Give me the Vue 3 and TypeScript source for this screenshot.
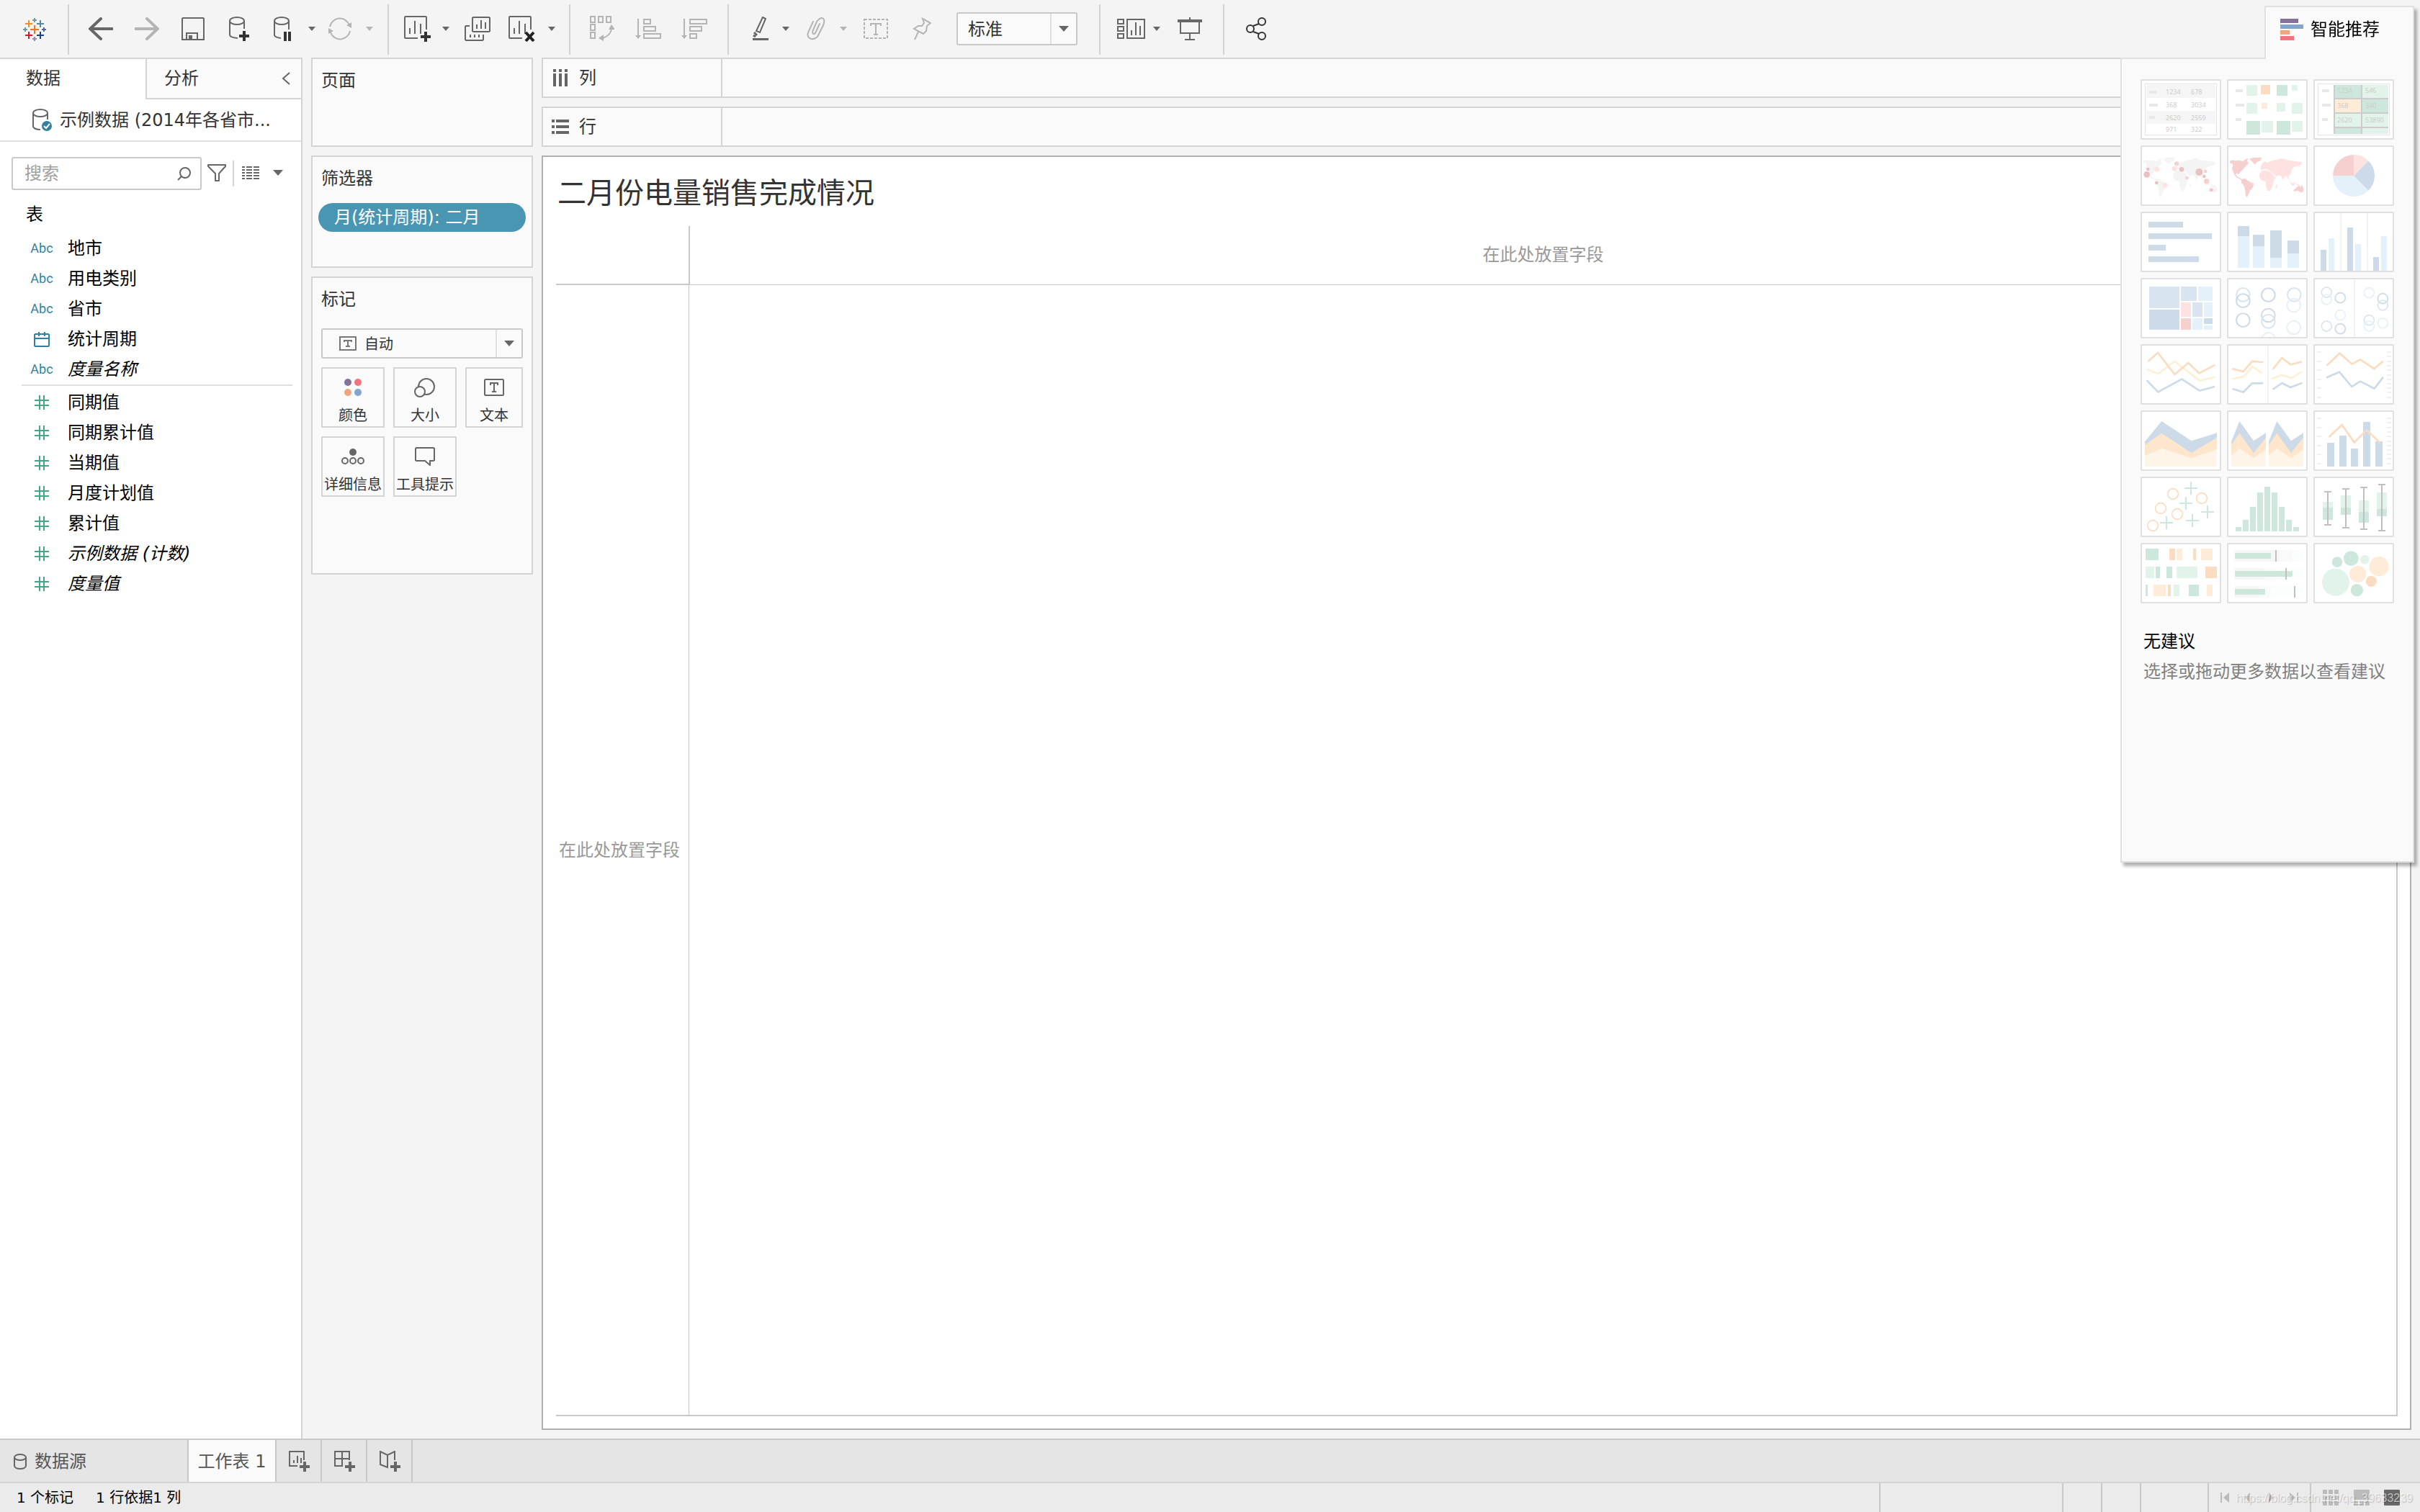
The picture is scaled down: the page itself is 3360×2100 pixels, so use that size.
<script setup lang="ts">
import { ref } from 'vue'

interface Icon { w: number; h: number; body: string }
interface Tool { icon: string; label: string; off?: boolean }
interface Field { name: string; kind: 'abc' | 'date' | 'num'; italic?: boolean }

const G = '#666'
const L = '#b4b4b4'
const stroke = (d: string, c = G, w = 2) => `<path d="${d}" fill="none" stroke="${c}" stroke-width="${w}"/>`
const fill = (d: string, c = G) => `<path d="${d}" fill="${c}"/>`
const cross = (x: number, y: number, s: number, c: string) => stroke(`M${x - s} ${y}H${x + s}M${x} ${y - s}V${y + s}`, c, 2)
const chart = stroke('M31 19V2Q31 1 30 1H2Q1 1 1 2V30Q1 31 2 31H19M8 17V25M15 7V25M23 11V25')

const icons: Record<string, Icon> = {
  logo: { w: 32, h: 32, body: cross(16, 16, 6, '#e8762c') + cross(16, 3, 3, '#7099a6') + cross(8, 8, 5, '#eb912b') + cross(24, 8, 5, '#59879b') + cross(3, 16, 3, '#7099a6') + cross(29, 16, 3, '#5b6591') + cross(8, 24, 5, '#c72035') + cross(24, 24, 5, '#1f447e') + cross(16, 29, 3, '#8b8fb0') },
  back: { w: 34, h: 32, body: `<path d="M17 2L2 16L17 30M2 16H33" fill="none" stroke="${G}" stroke-width="4" stroke-linecap="round"/>` },
  forward: { w: 34, h: 32, body: `<path d="M17 2L32 16L17 30M32 16H1" fill="none" stroke="${L}" stroke-width="4" stroke-linecap="round"/>` },
  save: { w: 32, h: 32, body: stroke('M2 1H30L31 2V31H1V2ZM7 31V22H22V31M11 31V26H15') + fill('M10 25h5v6h-5z') },
  dbPlus: { w: 28, h: 34, body: `<ellipse cx="11" cy="6" rx="10" ry="5" fill="none" stroke="${G}" stroke-width="2"/>` + stroke('M1 6V26Q2 29 12 30M21 6V17') + stroke('M14 27H28M21 20V34', '#333', 4) },
  dbPause: { w: 24, h: 34, body: `<ellipse cx="11" cy="6" rx="10" ry="5" fill="none" stroke="${G}" stroke-width="2"/>` + stroke('M1 6V26Q2 29 10 30M21 6V18') + fill('M14 21h4v13h-4zM20 21h4v13h-4z', '#333') },
  refresh: { w: 34, h: 32, body: stroke('M3 13A14 14 0 0 1 30 11M31 19A14 14 0 0 1 4 21', L) + fill('M26 11L33 7V15ZM1 15L8 19L1 23Z', L) },
  chartPlus: { w: 37, h: 36, body: chart + stroke('M23 29H37M30 22V36', '#333', 4) },
  chartX: { w: 37, h: 36, body: chart + stroke('M24 23L35 35M35 23L24 35', '#222', 4) },
  duplicate: { w: 36, h: 34, body: stroke('M12 1H34L35 2V20L34 21H12L11 20V2ZM17 11V17M23 5V17M29 8V17M7 13H2L1 14V32L2 33H25L26 32V25M8 25V29M14 25V29M20 25V29') },
  swap: { w: 34, h: 36, body: stroke('M1 1H7V9H1ZM12 1H18V9H12ZM23 1H29V9H23ZM1 12H7V20H1ZM1 23H7V31H1ZM30 18Q29 27 18 31', L) + fill('M30 12L35 19H26ZM12 31L19 26V35Z', L) },
  sortAsc: { w: 36, h: 28, body: stroke('M4 0V24M12 1H21V7H12ZM12 11H28V17H12ZM12 21H35V27H12Z', L) + fill('M0 23H8L4 28Z', L) },
  sortDesc: { w: 36, h: 28, body: stroke('M4 0V24M12 21H21V27H12ZM12 11H28V17H12ZM12 1H35V7H12Z', L) + fill('M0 23H8L4 28Z', L) },
  pen: { w: 22, h: 34, body: stroke('M14 1L18 3L10 22L5 20Z') + stroke('M2 22L6 26M1 26L4 28', G, 3) + fill('M0 30H22V33H0Z') },
  clip: { w: 26, h: 32, body: `<path d="M18 9L12 22Q9 25 8 20L14 6Q20 -2 24 3Q25 6 23 11L15 27Q8 33 3 28Q0 25 3 19L9 6" fill="none" stroke="${L}" stroke-width="2" stroke-linecap="round"/>` },
  textBox: { w: 34, h: 28, body: `<path d="M1 1H33V27H1Z" fill="none" stroke="${L}" stroke-width="2" stroke-dasharray="4 2"/>` + stroke('M10 10V7H24V10M17 7V22M14 22H20', L) },
  pin: { w: 26, h: 32, body: stroke('M14 2L25 8L20 12L19 19L15 23L2 16L8 12H13L16 8ZM8 20L3 31', L) },
  cards: { w: 40, h: 28, body: stroke('M1 1H9V7H1ZM1 11H9V17H1ZM1 21H9V27H1ZM14 1H38V27H14ZM20 16V23M26 5V23M32 10V23') },
  present: { w: 34, h: 32, body: fill('M0 3H34V7H0ZM16 0H18V3H16ZM10 30H24V32H10Z') + stroke('M4 6V22H30V6M17 23V31') },
  share: { w: 28, h: 32, body: `<g fill="none" stroke="#333" stroke-width="2"><circle cx="6" cy="16" r="5"/><circle cx="22" cy="6" r="5"/><circle cx="22" cy="26" r="5"/><path d="M10 12L18 9M10 20L18 23"/></g>` },
  caret: { w: 12, h: 8, body: fill('M1 1H11L6 7Z') },
  caretOff: { w: 12, h: 8, body: fill('M1 1H11L6 7Z', L) },
  caretBig: { w: 14, h: 8, body: fill('M0 0H14L7 8Z') },
  chevron: { w: 12, h: 18, body: stroke('M11 1L2 9L11 17') },
  source: { w: 28, h: 32, body: `<ellipse cx="11" cy="6" rx="10" ry="5" fill="none" stroke="${G}" stroke-width="2"/>` + stroke('M1 6V25Q3 29 11 29M21 6V15') + `<circle cx="20" cy="24" r="7" fill="#347fa0"/>` + stroke('M16 24L19 27L24 21', '#fff') },
  search: { w: 19, h: 19, body: `<circle cx="11" cy="8" r="7" fill="none" stroke="${G}" stroke-width="2"/>` + stroke('M6 13L1 18') },
  funnel: { w: 26, h: 25, body: `<path d="M1 1H25V3L16 13V23H11V13L1 3Z" fill="none" stroke="${G}" stroke-width="2" stroke-linejoin="round"/>` },
  list: { w: 24, h: 18, body: [0, 4, 8, 12, 16].map(y => fill(`M0 ${y}h4v2h-4zM6 ${y}h8v2h-8zM16 ${y}h8v2h-8z`)).join('') },
  date: { w: 22, h: 21, body: stroke('M2 3H20L21 4V19L20 20H2L1 19V4ZM1 9H21M7 0V6M15 0V6', '#347fa0') },
  num: { w: 20, h: 20, body: stroke('M0 7H20M0 14H20M7 0V20M13 0V20', '#45a785') },
  columns: { w: 24, h: 24, body: fill('M2 0h4v4h-4zM10 0h4v4h-4zM18 0h4v4h-4zM2 6h4v18h-4zM10 6h4v18h-4zM18 6h4v18h-4z') },
  rows: { w: 24, h: 20, body: fill('M0 0h4v4h-4zM0 8h4v4h-4zM0 16h4v4h-4zM6 0h18v4h-18zM6 8h18v4h-18zM6 16h18v4h-18z') },
  textSmall: { w: 24, h: 20, body: stroke('M1 1H23V19H1ZM7 8V6H17V8M12 6V14M9 14H15', '#777') },
  colour: { w: 26, h: 26, body: '<circle cx="6" cy="6" r="5" fill="#857199"/><circle cx="20" cy="6" r="5" fill="#f9717f"/><circle cx="6" cy="20" r="5" fill="#f2a57c"/><circle cx="20" cy="20" r="5" fill="#83a4cb"/>' },
  size: { w: 30, h: 28, body: `<g fill="#fafafa" stroke="${G}" stroke-width="2"><circle cx="17" cy="13" r="11"/><circle cx="8" cy="20" r="7"/></g>` },
  text: { w: 28, h: 24, body: stroke('M2 1H26L27 2V22L26 23H2L1 22V2ZM9 9V6H19V9M14 6V18M11 18H17') },
  detail: { w: 32, h: 22, body: `<circle cx="16" cy="5" r="5" fill="${G}"/><g fill="none" stroke="${G}" stroke-width="2"><circle cx="5" cy="17" r="4"/><circle cx="16" cy="17" r="4"/><circle cx="27" cy="17" r="4"/></g>` },
  tooltip: { w: 28, h: 26, body: stroke('M2 1H26L27 2V18L26 19H21V25L14 19H2L1 18V2Z') },
  showMe: { w: 32, h: 30, body: fill('M0 0H25V6H0Z', '#857199') + fill('M0 8H32V14H0Z', '#83a4cb') + fill('M0 16H13V22H0Z', '#f2a57c') + fill('M0 24H19V30H0Z', '#f9717f') },
  dbSmall: { w: 18, h: 22, body: stroke('M1 5V17Q2 21 9 21Q16 21 17 17V5') + `<ellipse cx="9" cy="5" rx="8" ry="4" fill="none" stroke="${G}" stroke-width="2"/>` },
  newSheet: { w: 30, h: 30, body: stroke('M21 13V1H1V21H12M7 13V17M12 7V17M17 10V17') + stroke('M15 22H29M22 15V29', G, 4) },
  newDash: { w: 30, h: 30, body: stroke('M21 13V1H1V21H12M11 1V21M1 11H21') + stroke('M15 22H29M22 15V29', G, 4) },
  newStory: { w: 30, h: 30, body: stroke('M21 13V1L11 6L1 1V19L11 23V6') + stroke('M15 22H29M22 15V29', G, 4) },
  first: { w: 12, h: 14, body: fill('M0 0h2v14h-2zM12 0V14L4 7Z', '#bbb') },
  prev: { w: 12, h: 14, body: fill('M9 0V14L2 7Z', '#bbb') },
  next: { w: 12, h: 14, body: fill('M3 0V14L9 7Z', '#aaa') },
  last: { w: 12, h: 14, body: fill('M10 0h2v14h-2zM0 0V14L8 7Z', '#bbb') },
  gridView: { w: 22, h: 22, body: [0, 8, 16].map(y => fill(`M0 ${y}h6v6h-6zM8 ${y}h6v6h-6zM16 ${y}h6v6h-6z`, '#bbb')).join('') },
  film: { w: 22, h: 22, body: fill('M0 0h22v14h-22zM0 16h6v6h-6zM8 16h6v6h-6zM16 16h6v6h-6z', '#bbb') },
  tabView: { w: 22, h: 22, body: fill('M1 0H21L22 1V21L21 22H1L0 21V1Z') },
}

const groups: { cls: string; tools: Tool[] }[] = [
  { cls: 'g-data', tools: [
    { icon: 'back', label: '撤消' }, { icon: 'forward', label: '重做', off: true }, { icon: 'save', label: '保存' },
    { icon: 'dbPlus', label: '新建数据源' }, { icon: 'dbPause', label: '暂停自动更新' }, { icon: 'caret', label: '更新选项' },
    { icon: 'refresh', label: '运行更新', off: true }, { icon: 'caretOff', label: '运行选项', off: true },
  ] },
  { cls: 'g-sheet', tools: [
    { icon: 'chartPlus', label: '新建工作表' }, { icon: 'caret', label: '新建选项' }, { icon: 'duplicate', label: '复制' },
    { icon: 'chartX', label: '清除工作表' }, { icon: 'caret', label: '清除选项' },
  ] },
  { cls: 'g-sort', tools: [
    { icon: 'swap', label: '交换行和列', off: true }, { icon: 'sortAsc', label: '升序排序', off: true }, { icon: 'sortDesc', label: '降序排序', off: true },
  ] },
  { cls: 'g-format', tools: [
    { icon: 'pen', label: '突出显示' }, { icon: 'caret', label: '突出显示选项' }, { icon: 'clip', label: '成员分组', off: true },
    { icon: 'caretOff', label: '分组选项', off: true }, { icon: 'textBox', label: '显示标记标签', off: true }, { icon: 'pin', label: '固定轴', off: true },
  ] },
  { cls: 'g-view', tools: [
    { icon: 'cards', label: '显示/隐藏卡' }, { icon: 'caret', label: '卡选项' }, { icon: 'present', label: '演示模式' },
  ] },
  { cls: 'g-share', tools: [{ icon: 'share', label: '共享' }] },
]

const dimensions: Field[] = [
  { name: '地市', kind: 'abc' }, { name: '用电类别', kind: 'abc' }, { name: '省市', kind: 'abc' },
  { name: '统计周期', kind: 'date' }, { name: '度量名称', kind: 'abc', italic: true },
]
const measures: Field[] = [
  { name: '同期值', kind: 'num' }, { name: '同期累计值', kind: 'num' }, { name: '当期值', kind: 'num' },
  { name: '月度计划值', kind: 'num' }, { name: '累计值', kind: 'num' },
  { name: '示例数据 (计数)', kind: 'num', italic: true }, { name: '度量值', kind: 'num', italic: true },
]
const marks = [
  { icon: 'colour', label: '颜色' }, { icon: 'size', label: '大小' }, { icon: 'text', label: '文本' },
  { icon: 'detail', label: '详细信息' }, { icon: 'tooltip', label: '工具提示' },
]
const newTabs = [
  { icon: 'newSheet', label: '新建工作表' }, { icon: 'newDash', label: '新建仪表板' }, { icon: 'newStory', label: '新建故事' },
]

const fit = ref('标准')
const markType = ref('自动')
const query = ref('')

/* Chart thumbnails, drawn on a 336 x 252 canvas */
const B = '#cddae7', BM = '#d8e5f0', BL = '#e4f0fa'
const GR = '#cee7dc', GL = '#e2f3e9', OR = '#fbdcc0', OL = '#feebd8'
const PK = '#f6d0cf', PL = '#fee1e1', YL = '#fdf0d5'
const r = (c: string, ...boxes: number[][]) => boxes.map(([x, y, w, h]) => `<rect x="${x}" y="${y}" width="${w}" height="${h}" fill="${c}"/>`).join('')
const ring = (c: string, rad: number, w: number, ...pts: number[][]) => pts.map(([x, y]) => `<circle cx="${x}" cy="${y}" r="${rad}" fill="none" stroke="${c}" stroke-width="${w}"/>`).join('')
const dot = (c: string, ...pts: number[][]) => pts.map(([x, y, s]) => `<circle cx="${x}" cy="${y}" r="${s}" fill="${c}"/>`).join('')
const line = (c: string, d: string) => `<path d="${d}" fill="none" stroke="${c}" stroke-width="8" stroke-linecap="round"/>`
const num = (...items: [number, number, string][]) => items.map(([x, y, t]) => `<text x="${x}" y="${y}" font-family="Noto Sans, sans-serif" font-size="27" fill="#ccc">${t}</text>`).join('')
const ticks = [30, 69, 105, 144, 180, 219].map(y => r('#f0f0f0', [15, y, 18, 6])).join('') +
  [30, 48, 69, 87, 105, 126, 144, 162, 180, 198, 219].map(y => r('#f0f0f0', [306, y, 18, 6])).join('')
const frame = '<rect x="19" y="19" width="298" height="214" fill="none" stroke="#e4e4e4" stroke-width="3"/>'
const americas = 'M12 66L20 61L36 64L52 62L66 66L80 56L90 54L82 66L92 72L80 84L70 96L62 106L54 112L48 122L44 116L36 118L40 128L48 132L62 140L76 138L88 148L112 160L106 178L96 188L88 206L84 216L78 210L76 190L72 170L60 156L60 144L50 138L40 134L30 120L24 106L20 94L26 84L22 74L14 76ZM92 56L110 51L146 51L138 64L124 70L116 80L108 70Z'
const oldWorld = 'M142 86L148 74L158 66L168 72L190 62L214 58L230 54L256 62L290 66L314 70L308 82L300 84L304 94L296 84L280 90L270 100L266 118L256 128L262 146L268 160L258 142L248 128L240 128L234 146L226 128L212 124L206 130L196 120L186 108L176 106L166 98L152 100L142 102L140 92ZM136 118L146 104L166 104L186 112L196 130L204 132L194 150L190 170L180 188L170 190L162 168L162 150L144 146L134 132ZM204 166L210 160L208 176L202 178ZM262 150L274 158L286 154L282 166L270 166ZM288 160L304 166L308 174L296 170Z'
const oceania = 'M278 186L290 174L300 168L306 174L312 164L320 184L316 194L306 196L296 188L278 192Z'
const area = (x: number, k: number) => {
  const p = (v: number) => Math.round(x + v * k)
  return `<path d="M${p(0)} 130L${p(70)} 45L${p(194)} 127L${p(300)} 94V234H${p(0)}Z" fill="${B}"/>` +
    `<path d="M${p(0)} 143L${p(70)} 95L${p(194)} 177L${p(300)} 113V234H${p(0)}Z" fill="#fee6cc"/>` +
    `<path d="M${p(0)} 189L${p(70)} 158L${p(194)} 199L${p(300)} 163V234H${p(0)}Z" fill="#fef5e8"/>`
}
const box = (x: number, top: number, up: number, mid: number, low: number, bottom: number) =>
  r(GL, [x, up, 42, mid - up]) + r(GR, [x, mid, 42, low - mid]) +
  r('#c0c0c0', [x + 18, top, 6, bottom - top], [x + 6, top, 30, 6], [x + 6, bottom - 6, 30, 6])

const thumbs: { name: string; body: string }[] = [
  { name: '文本表', body: frame + r('#f5f5f5', [24, 24, 288, 54], [24, 132, 288, 54]) + r('#e8e8e8', [36, 48, 30, 12], [36, 102, 36, 12], [36, 153, 24, 12]) +
    num([105, 62, '1234'], [210, 62, '678'], [105, 116, '368'], [210, 116, '3034'], [105, 170, '2620'], [210, 170, '2559'], [105, 218, '971'], [210, 218, '322']) },
  { name: '热图', body: r('#e8e8e8', [36, 42, 30, 12], [36, 102, 36, 12], [36, 162, 24, 12]) + r(GL, [81, 24, 45, 45], [270, 24, 24, 24], [81, 99, 45, 45], [207, 99, 36, 36], [270, 99, 45, 45], [144, 174, 48, 48], [270, 174, 45, 45]) +
    r(GR, [207, 24, 45, 45], [81, 174, 57, 57], [207, 174, 57, 57]) + r(OR, [141, 24, 39, 39]) + r(OL, [144, 99, 24, 24]) },
  { name: '突出显示表', body: frame + r('#e8e8e8', [36, 42, 30, 12], [36, 102, 36, 12], [36, 162, 24, 12]) + r('#ccc', [84, 24, 228, 204]) +
    r(GR, [90, 24, 108, 54], [204, 84, 108, 54], [90, 204, 108, 24]) + r(GL, [204, 24, 108, 54], [90, 144, 108, 54], [204, 144, 108, 54], [204, 204, 108, 24]) + r(OL, [90, 84, 108, 54]) +
    num([99, 57, '1234'], [216, 57, '546'], [99, 120, '368'], [216, 120, '340'], [99, 180, '2620'], [216, 180, '53890']) },
  { name: '符号地图', body: fill(americas + oldWorld + oceania, '#f4f4f4') + dot('#ebc0c5', [26, 121, 13], [31, 99, 7], [171, 100, 10], [244, 111, 15], [265, 129, 7], [67, 156, 7], [295, 186, 7]) +
    dot(PL, [69, 100, 10], [141, 97, 10], [102, 166, 10]) + dot(PK, [150, 76, 9], [193, 135, 7], [271, 108, 7], [275, 149, 11]) },
  { name: '填充地图', body: fill(americas + oceania, PK) + fill(oldWorld, PL) },
  { name: '饼图', body: fill('M168 126V39A87 87 0 0 0 81 126Z', PK) + fill('M168 126H81A87 87 0 0 0 229 188Z', BL) + fill('M168 126L229 188A87 87 0 0 0 229 64Z', B) + fill('M168 126L229 64A87 87 0 0 0 168 39Z', PL) },
  { name: '水平条', body: r(B, [33, 42, 144, 24], [33, 90, 264, 24], [33, 138, 72, 24], [33, 186, 210, 24]) },
  { name: '堆叠条', body: r(B, [45, 60, 48, 42], [108, 96, 48, 48], [180, 78, 48, 114], [252, 120, 48, 54]) + r(BL, [45, 102, 48, 132], [108, 144, 48, 90], [180, 192, 48, 42], [252, 174, 48, 60]) },
  { name: '并排条', body: r('#f2f2f2', [111, 6, 6, 240], [222, 6, 6, 240]) + r(B, [30, 159, 24, 87], [141, 66, 24, 180], [249, 189, 24, 57]) + r(BL, [63, 111, 24, 135], [174, 135, 24, 111], [282, 102, 24, 144]) },
  { name: '树状图', body: r(BM, [36, 36, 126, 90], [168, 36, 66, 60], [216, 102, 42, 60]) + r(B, [36, 132, 126, 84], [264, 168, 36, 24]) + r(BL, [240, 36, 60, 60], [264, 102, 36, 60], [216, 168, 42, 48], [264, 198, 36, 18]) + r(PL, [168, 102, 42, 60]) + r(PK, [168, 168, 42, 48]) },
  { name: '圆视图', body: ring(BM, 28, 6, [67, 70], [280, 70]) + ring(B, 28, 6, [67, 95], [67, 176], [172, 71], [172, 156]) + ring(BM, 28, 6, [172, 181]) + ring(BL, 28, 6, [278, 114], [278, 207], [173, 256]) },
  { name: '并排圆', body: r('#f2f2f2', [168, 6, 6, 240]) + ring(BM, 21, 5, [55, 60], [55, 201], [232, 176]) + ring(B, 21, 5, [112, 83], [112, 212], [289, 86]) + ring(BM, 21, 5, [289, 114]) + ring(BL, 21, 5, [55, 90], [112, 155], [232, 62], [289, 189], [232, 201]) },
  { name: '线', body: line(YL, 'M29 106L74 124L141 71L246 152L306 138') + line(OR, 'M35 69L72 36L142 126L199 78L244 121L307 88') + line(B, 'M28 153L73 199L172 146L246 194L306 178') },
  { name: '离散线', body: r('#f2f2f2', [168, 6, 6, 240]) + line(YL, 'M25 144L68 136L107 93L143 120M188 144L227 129L270 141L311 116') + line(OR, 'M25 103L68 114L105 71L147 75M193 102L229 57L265 85L309 74') + line(B, 'M26 187L68 200L105 163L147 163M193 187L229 162L265 180L310 163') },
  { name: '双线', body: ticks + line(OR, 'M58 87L109 38L161 83L195 64L253 102L288 73') + line(B, 'M57 138L108 116L160 177L195 155L254 185L289 140') },
  { name: '面积图', body: area(18, 1) },
  { name: '离散面积图', body: area(18, 0.48) + area(174, 0.48) },
  { name: '双组合', body: ticks + r(B, [57, 135, 30, 99], [108, 105, 30, 129], [156, 159, 30, 75], [207, 48, 30, 186], [258, 129, 30, 105]) + line(OR, 'M67 109L119 60L170 133L222 82L275 133') },
  { name: '散点图', body: ring(OR, 22, 5, [135, 72], [255, 90], [84, 132], [153, 156], [51, 204]) + [[210, 48], [189, 111], [279, 147], [216, 183], [108, 192]].map(([x, y]) => stroke(`M${x - 27} ${y}H${x + 27}M${x} ${y - 27}V${y + 27}`, GR, 6)).join('') },
  { name: '直方图', body: r(GR, [36, 210, 24, 18], [66, 180, 24, 48], [96, 126, 24, 102], [126, 66, 24, 162], [156, 42, 24, 186], [186, 66, 24, 162], [216, 126, 24, 102], [246, 180, 24, 48], [276, 210, 24, 18]) },
  { name: '盒须图', body: box(39, 60, 105, 129, 180, 204) + box(114, 48, 78, 129, 159, 216) + box(189, 42, 99, 147, 192, 222) + box(264, 30, 66, 135, 165, 228) },
  { name: '甘特图', body: r(GR, [21, 24, 54, 48], [63, 99, 18, 48], [108, 99, 24, 48], [21, 174, 9, 48], [201, 174, 42, 48]) + r(GL, [21, 99, 36, 48], [150, 99, 87, 48], [138, 174, 24, 48]) + r(OR, [120, 24, 24, 48], [219, 24, 12, 48], [270, 99, 48, 48], [114, 174, 12, 48]) + r(OL, [150, 24, 24, 48], [252, 24, 48, 48], [54, 174, 51, 48], [276, 174, 24, 48]) },
  { name: '标靶图', body: r('#fcfefd', [33, 30, 285, 48], [33, 105, 285, 48], [33, 180, 285, 48]) + r('#fafafa', [33, 30, 237, 48], [33, 105, 174, 48], [33, 180, 150, 48]) + r('#f6f6f6', [33, 30, 186, 48], [33, 105, 120, 48], [33, 180, 102, 48]) + r(GR, [33, 42, 150, 24], [33, 117, 240, 24], [33, 192, 126, 24]) + r('#c0c0c0', [201, 30, 6, 48], [243, 105, 6, 48], [279, 180, 6, 48]) },
  { name: '填充气泡图', body: dot(GL, [93, 164, 57], [214, 70, 19]) + dot(GR, [99, 80, 22], [157, 65, 31], [181, 197, 26]) + dot(OL, [273, 98, 41], [185, 130, 35]) + dot(OR, [241, 160, 23]) },
]
</script>

<template>
  <div class="app">
    <header class="toolbar">
      <div class="logo"><svg width="32" height="32" v-html="icons.logo.body" /></div>
      <template v-for="g in groups" :key="g.cls">
        <div class="group" :class="g.cls">
          <button v-for="t in g.tools" :key="t.label" type="button" :aria-label="t.label" :disabled="t.off">
            <svg :width="icons[t.icon].w" :height="icons[t.icon].h" v-html="icons[t.icon].body" />
          </button>
          <div v-if="g.cls === 'g-format'" class="picker fit">
            <select v-model="fit" aria-label="适合"><option>标准</option></select>
            <span class="drop"><svg width="14" height="8" v-html="icons.caretBig.body" /></span>
          </div>
        </div>
      </template>
    </header>

    <main class="work">
      <aside class="data">
        <div class="tabs">
          <button type="button" class="tab active">数据</button>
          <div class="tab-rest">
            <button type="button" class="tab">分析</button>
            <button type="button" class="collapse" aria-label="折叠"><svg width="12" height="18" v-html="icons.chevron.body" /></button>
          </div>
        </div>
        <button type="button" class="source">
          <svg width="28" height="32" v-html="icons.source.body" />
          <span>示例数据 (2014年各省市...</span>
        </button>
        <div class="find">
          <label class="search">
            <input v-model="query" type="text" placeholder="搜索" aria-label="搜索">
            <svg width="19" height="19" v-html="icons.search.body" />
          </label>
          <button type="button" class="funnel" aria-label="筛选"><svg width="26" height="25" v-html="icons.funnel.body" /></button>
          <button type="button" class="view-by" aria-label="查看方式">
            <svg width="24" height="18" v-html="icons.list.body" />
            <svg width="14" height="8" v-html="icons.caretBig.body" />
          </button>
        </div>
        <h2 class="tables">表</h2>
        <ul class="fields">
          <li v-for="f in dimensions" :key="f.name">
            <span class="kind"><template v-if="f.kind === 'abc'">Abc</template><svg v-else width="22" height="21" v-html="icons.date.body" /></span>
            <span :class="{ italic: f.italic }">{{ f.name }}</span>
          </li>
        </ul>
        <ul class="fields measures">
          <li v-for="f in measures" :key="f.name">
            <span class="kind"><svg width="20" height="20" v-html="icons.num.body" /></span>
            <span :class="{ italic: f.italic }">{{ f.name }}</span>
          </li>
        </ul>
      </aside>

      <section class="cards">
        <div class="card pages"><h3>页面</h3></div>
        <div class="card filters">
          <h3>筛选器</h3>
          <button type="button" class="pill">月(统计周期): 二月</button>
        </div>
        <div class="card marks">
          <h3>标记</h3>
          <div class="picker mark-type">
            <svg class="lead" width="24" height="20" v-html="icons.textSmall.body" />
            <select v-model="markType" aria-label="标记类型"><option>自动</option></select>
            <span class="drop"><svg width="14" height="8" v-html="icons.caretBig.body" /></span>
          </div>
          <div class="mark-grid">
            <button v-for="m in marks" :key="m.label" type="button">
              <span class="mark-icon"><svg :width="icons[m.icon].w" :height="icons[m.icon].h" v-html="icons[m.icon].body" /></span>
              <span class="mark-label">{{ m.label }}</span>
            </button>
          </div>
        </div>
      </section>

      <section class="sheet">
        <div class="shelf"><div class="shelf-name"><svg width="24" height="24" v-html="icons.columns.body" />列</div></div>
        <div class="shelf"><div class="shelf-name"><svg width="24" height="20" v-html="icons.rows.body" />行</div></div>
        <div class="view">
          <h1>二月份电量销售完成情况</h1>
          <div class="pane">
            <div class="corner" />
            <div class="drop-cols">在此处放置字段</div>
            <div class="drop-rows">在此处放置字段</div>
            <div class="canvas" />
          </div>
        </div>
      </section>
    </main>

    <nav class="sheet-tabs">
      <button type="button" class="source-tab"><svg width="18" height="22" v-html="icons.dbSmall.body" />数据源</button>
      <button type="button" class="sheet-tab">工作表 1</button>
      <button v-for="n in newTabs" :key="n.icon" type="button" class="new-tab" :aria-label="n.label">
        <svg width="30" height="30" v-html="icons[n.icon].body" />
      </button>
    </nav>

    <footer class="status">
      <span>1 个标记</span>
      <span>1 行依据1 列</span>
      <div class="cells">
        <i class="c-wide" /><i class="c-small" /><i class="c-small" /><i class="c-mid" />
        <div class="pager">
          <button v-for="n in ['first', 'prev', 'next', 'last']" :key="n" type="button" :aria-label="n"><svg width="12" height="14" v-html="icons[n].body" /></button>
        </div>
        <div class="modes">
          <button v-for="n in ['gridView', 'film', 'tabView']" :key="n" type="button" :aria-label="n"><svg width="22" height="22" v-html="icons[n].body" /></button>
        </div>
      </div>
      <span class="stamp">https://blog.csdn.net/qq_39633239</span>
    </footer>

    <aside class="show-me">
      <button type="button" class="show-tab"><svg width="32" height="30" v-html="icons.showMe.body" />智能推荐</button>
      <div class="show-body">
        <div class="thumbs">
          <button v-for="t in thumbs" :key="t.name" type="button" :aria-label="t.name">
            <svg viewBox="6 6 324 240" width="108" height="80" v-html="t.body" />
          </button>
        </div>
        <h3>无建议</h3>
        <p>选择或拖动更多数据以查看建议</p>
      </div>
    </aside>
  </div>
</template>

<style>
body { margin: 0; }
</style>

<style scoped>
* { box-sizing: border-box; }
.app {
  position: relative;
  display: flex;
  flex-direction: column;
  min-height: 100vh;
  background: #f4f4f4;
  color: #333;
  font: 24px/36px "DejaVu Sans", "Noto Sans CJK SC", sans-serif;
}
button {
  display: flex;
  align-items: center;
  justify-content: center;
  margin: 0;
  padding: 0;
  border: 0;
  background: none;
  color: inherit;
  font: inherit;
}
svg { display: block; flex: none; }
h1, h2, h3, p, ul { margin: 0; padding: 0; font-size: 24px; font-weight: 400; list-style: none; }

.toolbar { display: flex; height: 80px; padding: 6px 0 4px; }
.logo { display: flex; align-items: center; padding: 0 30px 0 32px; }
.group { display: grid; align-items: center; border-left: 2px solid #d4d4d4; }
.group button { height: 70px; padding-bottom: 2px; }
.g-data { grid-template-columns: 64px 64px 64px 64px 56px 26px 52px 30px; padding: 0 10px 0 12px; }
.g-sheet { grid-template-columns: 54px 26px 62px 60px 24px; padding: 0 12px; }
.g-sort { grid-template-columns: 64px 64px 64px; padding: 0 14px 0 12px; }
.g-format { grid-template-columns: 48px 22px 62px 14px 76px 74px 168px; padding: 0 30px 0 20px; }
.g-format button:nth-of-type(6) { padding-right: 22px; }
.g-view { grid-template-columns: 50px 20px 72px; padding: 0 10px 0 18px; }
.g-share { grid-template-columns: 88px; }

.picker {
  display: flex;
  align-items: stretch;
  border: 2px solid #c8c8c8;
  border-radius: 3px;
  background: #fafafa;
}
.picker select {
  flex: 1;
  min-width: 0;
  border: 0;
  padding: 2px 0 0;
  background: none;
  color: #333;
  font: inherit;
  appearance: none;
}
.picker .drop { display: flex; align-items: center; justify-content: center; width: 36px; border-left: 2px solid #e0e0e0; }
.fit { height: 46px; margin-bottom: 2px; }
.fit select { padding-left: 14px; }

.work { display: flex; flex: 1; }
.data { width: 420px; border-top: 2px solid #d4d4d4; border-right: 2px solid #d4d4d4; background: #fff; }
.tabs { display: flex; height: 56px; }
.tab { color: #333; }
.tab.active { width: 202px; padding-left: 36px; padding-bottom: 2px; justify-content: flex-start; }
.tab-rest { display: flex; flex: 1; justify-content: space-between; padding: 0 15px 0 24px; border-left: 2px solid #d4d4d4; border-bottom: 2px solid #d4d4d4; background: #fafafa; }
.source { width: 100%; height: 59px; padding-left: 45px; gap: 10px; justify-content: flex-start; border-bottom: 2px solid #e0e0e0; color: #333; white-space: nowrap; }
.find { display: flex; align-items: center; height: 46px; margin: 21px 0 0 16px; }
.search { display: flex; align-items: center; width: 264px; height: 46px; padding: 0 13px 0 16px; border: 2px solid #c8c8c8; border-radius: 3px; }
.search input { flex: 1; min-width: 0; padding: 0; border: 0; outline: 0; background: none; font: inherit; color: #333; }
.search input::placeholder { color: #a0a0a0; opacity: 1; }
.funnel { width: 43px; height: 36px; padding: 0 1px 2px 0; }
.view-by { height: 36px; padding: 0 0 2px 11px; gap: 19px; border-left: 2px solid #d4d4d4; }
.tables { margin: 16px 0 8px; padding-left: 36px; color: #000; }
.fields { color: #000; }
.fields li { display: flex; align-items: center; height: 42px; }
.measures { margin: 0 12px 0 30px; border-top: 2px solid #e0e0e0; padding-top: 2px; }
.kind { display: flex; justify-content: center; width: 46px; margin: 0 13px 0 35px; color: #347fa0; font-family: Roboto, sans-serif; font-size: 18px; }
.measures .kind { margin-left: 5px; }
.italic { font-style: italic; }

.cards { display: flex; flex-direction: column; gap: 12px; width: 308px; margin-left: 12px; }
.card { border: 2px solid #d4d4d4; background: #fafafa; }
.card h3 { padding: 12px 0 0 12px; }
.pages { height: 124px; }
.filters { height: 156px; }
.marks { height: 414px; padding-right: 12px; }
.pill { width: 288px; height: 40px; margin: 16px 0 0 8px; padding-left: 22px; justify-content: flex-start; border-radius: 20px; background: #4996b2; color: #fff; }
.mark-type { height: 42px; margin: 22px 0 0 12px; font-size: 20px; }
.mark-type .lead { align-self: center; margin: 0 11px 0 23px; }
.mark-grid { display: grid; grid-template-columns: 88px 88px 80px; gap: 12px; margin: 12px 0 0 12px; }
.mark-grid button { flex-direction: column; justify-content: flex-start; height: 84px; border: 2px solid #d4d4d4; font-size: 20px; line-height: 30px; white-space: nowrap; }
.mark-icon { display: flex; align-items: center; height: 50px; padding-top: 2px; }

.sheet { display: flex; flex: 1; flex-direction: column; gap: 12px; min-width: 0; margin: 0 12px 12px; }
.shelf { display: flex; height: 56px; border: 2px solid #d4d4d4; background: #fafafa; }
.shelf-name { display: flex; align-items: center; gap: 14px; width: 249px; padding-left: 12px; border-right: 2px solid #d4d4d4; }
.view { display: flex; flex: 1; flex-direction: column; padding: 21px 17px 17px 18px; border: 2px solid #b0b0b0; background: #fff; }
.view h1 { padding: 0 0 17px 2px; font-size: 40px; line-height: 58px; }
.pane { display: grid; flex: 1; grid-template-columns: 184px 1fr; grid-template-rows: 82px 1fr; color: #999; }
.corner { border-bottom: 2px solid #c8c8c8; }
.drop-cols { display: flex; align-items: center; justify-content: center; padding: 0 2px 2px 0; border-left: 2px solid #c8c8c8; border-bottom: 1px solid #c8c8c8; }
.drop-rows { display: flex; align-items: center; padding-left: 4px; border-bottom: 2px solid #c8c8c8; white-space: nowrap; }
.canvas { border: solid #c8c8c8; border-width: 0 2px 2px 1px; }

.sheet-tabs { display: flex; height: 62px; border-top: 2px solid #c8c8c8; border-bottom: 2px solid #d4d4d4; background: #e5e5e5; color: #555; }
.sheet-tabs button { padding-top: 2px; }
.sheet-tabs .source-tab { width: 262px; padding-left: 19px; gap: 11px; justify-content: flex-start; border-right: 2px solid #c8c8c8; }
.sheet-tab { width: 122px; border-right: 2px solid #c8c8c8; background: #fafafa; white-space: nowrap; }
.sheet-tabs .new-tab { width: 63px; padding-left: 2px; border-right: 2px solid #c8c8c8; }

.status { position: relative; display: flex; align-items: center; gap: 31px; height: 40px; padding-left: 23px; background: #ebebeb; color: #000; font-size: 20px; line-height: 30px; }
.cells { display: flex; align-self: stretch; margin-left: auto; }
.cells > * { border-left: 2px solid #c8c8c8; }
.c-wide { width: 254px; }
.c-small { width: 54px; }
.c-mid { width: 94px; }
.pager { display: flex; justify-content: space-between; width: 142px; padding: 0 16px; }
.modes { display: flex; justify-content: space-between; width: 153px; padding: 0 28px 0 16px; }
.stamp { position: absolute; right: 10px; top: 6px; color: rgba(255, 255, 255, .6); font-family: "Liberation Sans", sans-serif; font-size: 16px; text-shadow: 1px 1px 1px rgba(0, 0, 0, .2); }

.show-me { position: absolute; top: 8px; right: 8px; display: flex; flex-direction: column; width: 408px; filter: drop-shadow(4px 5px 2px rgba(0, 0, 0, .3)); color: #000; }
.show-tab { position: relative; align-self: flex-end; width: 208px; height: 74px; padding: 0 0 10px 20px; gap: 10px; justify-content: flex-start; border: 2px solid #e0e0e0; border-bottom: 0; background: #fafafa; }
.show-body { height: 1118px; margin-top: -2px; padding: 28px 26px; border: 2px solid #e0e0e0; background: #fafafa; }
.thumbs { display: grid; grid-template-columns: repeat(3, 112px); gap: 8px; }
.thumbs button { height: 84px; border: 2px solid #e0e0e0; border-radius: 2px; background: #fff; }
.show-body h3 { margin-top: 35px; padding-left: 4px; line-height: 36px; }
.show-body p { margin-top: 6px; padding-left: 4px; color: #808080; white-space: nowrap; }
</style>
